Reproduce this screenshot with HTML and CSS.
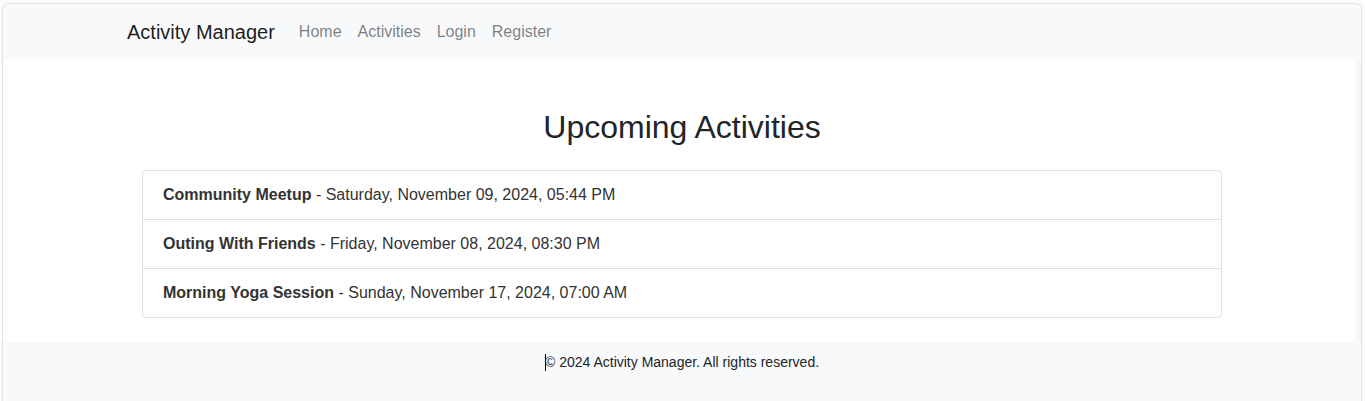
FILE: index.html
```html
<!DOCTYPE html>
<html lang="en">
<head>
<meta charset="utf-8">
<title>Activity Manager</title>
<link rel="stylesheet" href="styles.css">
</head>
<body>
<div class="frame">
  <nav class="navbar">
    <div class="container nav-inner">
      <a class="brand" href="#">Activity Manager</a>
      <ul class="nav-links">
        <li><a href="#">Home</a></li>
        <li><a href="#">Activities</a></li>
        <li><a href="#">Login</a></li>
        <li><a href="#">Register</a></li>
      </ul>
    </div>
  </nav>
  <main class="container main">
    <h2 class="title">Upcoming Activities</h2>
    <ul class="list-group">
      <li class="list-item"><strong>Community Meetup</strong> - Saturday, November 09, 2024, 05:44 PM</li>
      <li class="list-item"><strong>Outing With Friends</strong> - Friday, November 08, 2024, 08:30 PM</li>
      <li class="list-item"><strong>Morning Yoga Session</strong> - Sunday, November 17, 2024, 07:00 AM</li>
    </ul>
  </main>
  <footer class="footer">
    <p class="copy"><span class="caret"></span>&copy; 2024 Activity Manager. All rights reserved.</p>
  </footer>
</div>
</body>
</html>
```

FILE: styles.css
```css
* { box-sizing: border-box; }
html, body {
  margin: 0;
  padding: 0;
  background: #fbfbfb;
  height: 100%;
}
body {
  font-family: "Liberation Sans", Arial, sans-serif;
  font-size: 16px;
  line-height: 1.5;
  color: #212529;
  padding: 3px 3px 0 2px;
}
.frame {
  min-height: calc(100vh - 3px);
  display: flex;
  flex-direction: column;
  background: #fff;
  border: 1px solid #e2e3e5;
  border-bottom: none;
  border-radius: 7px 7px 0 0;
  overflow: hidden;
  box-shadow: inset -7px 0 7px -5px rgba(0,0,0,0.07);
}
.container {
  width: 100%;
  max-width: 1140px;
  margin: 0 auto;
  padding: 0 12px;
}
.navbar {
  background: #f8f9fa;
  padding: 8px 0;
}
.nav-inner {
  display: flex;
  align-items: center;
}
.brand {
  font-size: 20px;
  line-height: 30px;
  padding: 5px 0;
  margin-right: 16px;
  color: rgba(0,0,0,0.9);
  text-decoration: none;
  margin-left: 3px;
}
.nav-links {
  display: flex;
  list-style: none;
  margin: 0;
  padding: 0;
}
.nav-links a {
  display: block;
  padding: 8px;
  color: rgba(0,0,0,0.5);
  text-decoration: none;
}
.main {
  padding-top: 48px;
  flex: 0 0 auto;
}
.title {
  margin: 0 0 24px;
  font-size: 32px;
  font-weight: 400;
  line-height: 1.2;
  text-align: center;
}
.list-group {
  list-style: none;
  margin: 0 auto;
  padding: 0;
  max-width: 1080px;
  border: 1px solid rgba(0,0,0,0.125);
  border-radius: 4px;
  color: #333;
}
.list-item {
  padding: 12px 20px;
  line-height: 24px;
  border-bottom: 1px solid rgba(0,0,0,0.125);
}
.list-item:last-child { border-bottom: none; }
.list-item strong { font-weight: 700; }
.footer {
  margin-top: 24px;
  flex: 1 0 auto;
  background: #f8f9fa;
  padding: 10px 0 8px;
  text-align: center;
}
.copy {
  margin: 0;
  font-size: 14px;
  line-height: 21px;
}
.caret {
  display: inline-block;
  width: 1px;
  height: 17px;
  background: #000;
  vertical-align: -4px;
  margin-right: -1px;
}
```
